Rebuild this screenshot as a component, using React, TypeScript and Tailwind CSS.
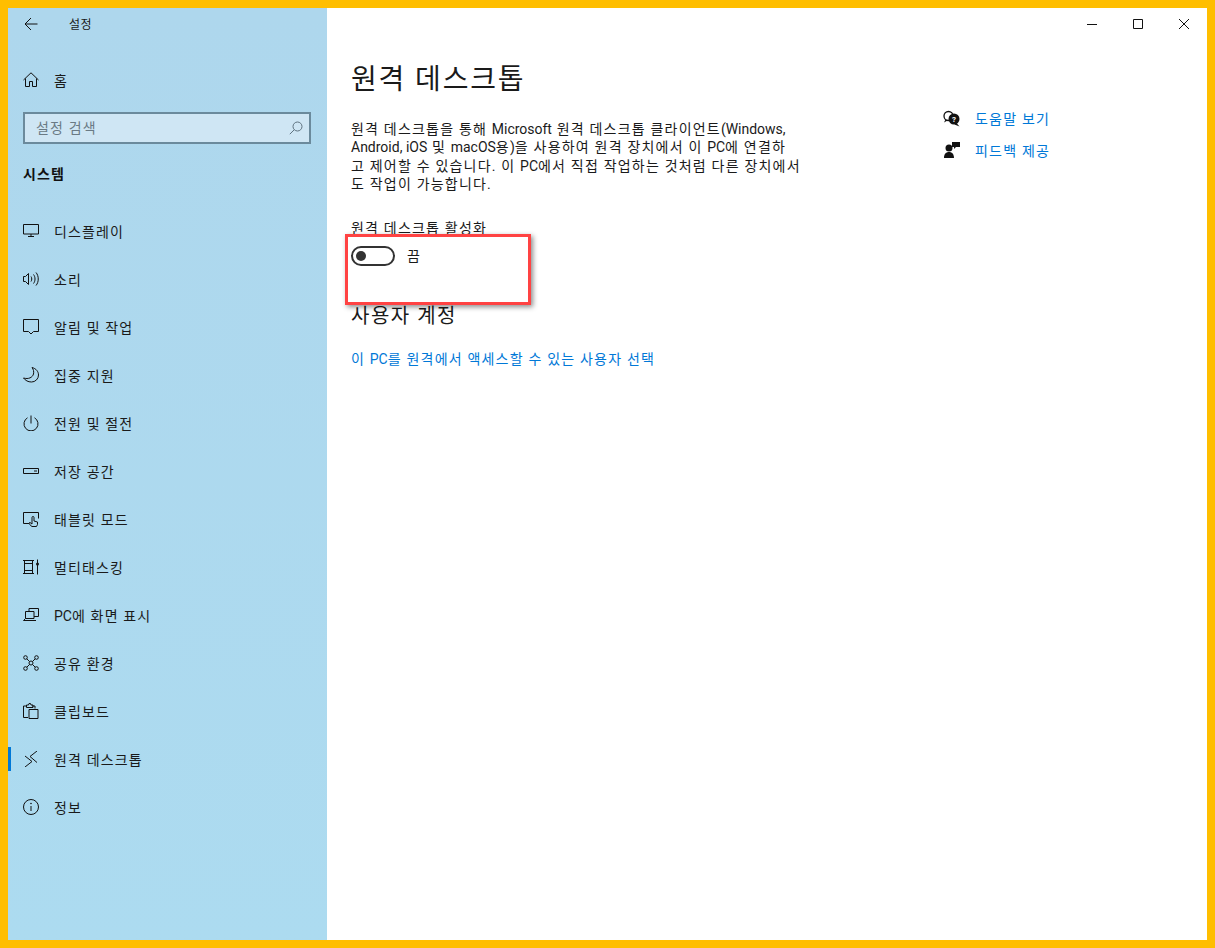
import type { ReactNode } from 'react';

const font = 'font-["Roboto","Noto_Sans_CJK_KR",sans-serif]';

function Icon({ children }: { children: ReactNode }) {
  return (
    <svg width="16" height="16" viewBox="0 0 16 16" fill="none" stroke="#111" strokeWidth="1" className="shrink-0">
      {children}
    </svg>
  );
}

// latin runs sit tighter than the hangul around them
function Lt({ children }: { children: ReactNode }) {
  return <span className="tracking-normal">{children}</span>;
}

const navItems: { label: ReactNode; key: string; icon: ReactNode; active?: boolean }[] = [
  {
    key: 'display',
    label: '디스플레이',
    icon: <path d="M.5 1.500h15v9.500H.5zM8 11v3M5 13.500h6" />,
  },
  {
    key: 'sound',
    label: '소리',
    icon: (
      <>
        <path d="M.5 5.500h2l3-3v11l-3-3h-2z" />
        <path d="M8 5.500c1 1.500 1 3.500 0 5M10.500 3.500c2 2.500 2 6.500 0 9M13 1.500c3 3.500 3 9.500 0 13" />
      </>
    ),
  },
  {
    key: 'notify',
    label: '알림 및 작업',
    icon: <path d="M.5.500h15v12h-5L8 15l-2.500-2.500h-5z" />,
  },
  {
    key: 'focus',
    label: '집중 지원',
    icon: <path d="M9 .5c4 1 6.500 4 6.500 7.500a7 7 0 0 1-7 7c-3.500 0-6-1.500-8-4 5 1.500 9-.5 10-4 .5-2.500 0-4.500-1.500-6.500z" />,
  },
  {
    key: 'power',
    label: '전원 및 절전',
    icon: <path d="M8 .5v8M4.500 2.800a7 7 0 1 0 7 0" />,
  },
  {
    key: 'storage',
    label: '저장 공간',
    icon: <path d="M.5 5.500h15v5H.5zM11 8h3" />,
  },
  {
    key: 'tablet',
    label: '태블릿 모드',
    icon: (
      <>
        <path d="M6 12.500H.5V1.500h15v6" />
        <path d="M9 15.500c-1.500-1-3-2.500-3-3.500l1 -.5 2 1.500V6.500a1 1 0 0 1 2 0V10l3.500 1v2.500l-1 2z" />
      </>
    ),
  },
  {
    key: 'multitask',
    label: '멀티태스킹',
    icon: (
      <>
        <path d="M0 1.500h11M1.500 1.500v13M9.500 1.500v13M1.500 4.500h8M1.500 11.500h8M0 14.500h11" />
        <path d="M14.500 .5v15" />
        <circle cx="14.500" cy="5" r="1.500" fill="#111" stroke="none" />
      </>
    ),
  },
  {
    key: 'project',
    label: (
      <>
        <Lt>PC</Lt>에 화면 표시
      </>
    ),
    icon: (
      <>
        <path d="M6 4V1.500h9.500v8H11" />
        <path d="M2.500 4.500h8.500v7H2.500zM.5 13.500h12.500M2.500 11.500l-2 2" />
      </>
    ),
  },
  {
    key: 'shared',
    label: '공유 환경',
    icon: (
      <>
        <circle cx="8" cy="8" r="2" />
        <circle cx="2.500" cy="2.500" r="1.800" />
        <circle cx="13.500" cy="2.500" r="1.800" />
        <circle cx="2.500" cy="13.500" r="1.800" />
        <circle cx="13.500" cy="13.500" r="1.800" />
        <path d="M3.800 3.800l2.800 2.800M12.200 3.800L9.400 6.600M3.800 12.200l2.800-2.800M12.200 12.200L9.400 9.400" />
      </>
    ),
  },
  {
    key: 'clipboard',
    label: '클립보드',
    icon: (
      <>
        <path d="M5 14.500H.5V3h3M9 3h3v2.500" />
        <path d="M3.500 4.500V2h2l.5-1.500h1.500L8 2h2v2.500zM6 6.500h9v9H6z" />
      </>
    ),
  },
  {
    key: 'remote',
    label: '원격 데스크톱',
    active: true,
    icon: <path d="M2 5l7 5.500L2 16M14 0L7 5.500l7 6" />,
  },
  {
    key: 'about',
    label: '정보',
    icon: (
      <>
        <circle cx="8" cy="8" r="7.500" />
        <path d="M8 7v5" />
        <circle cx="8" cy="4.500" r=".8" fill="#111" stroke="none" />
      </>
    ),
  },
];

function NavRow({ label, icon, active }: { label: ReactNode; icon: ReactNode; active?: boolean }) {
  return (
    <div className="relative flex h-12 items-center pl-[15px]">
      {active && <span className="absolute left-0 top-3 h-6 w-[3px] bg-[#0078d7]" />}
      <Icon>{icon}</Icon>
      <span className="ml-[15px] pt-[3px] text-[14px] tracking-[1.15px] text-[#1a1a1a]">{label}</span>
    </div>
  );
}

export default function App() {
  return (
    <div className={`flex h-[948px] w-[1215px] border-8 border-[#ffbe00] bg-white ${font}`}>
      <aside className="flex w-[319px] shrink-0 flex-col bg-gradient-to-b from-[#aed7ed] to-[#acdbf0]">
        <div className="flex h-8 items-center pl-4">
          <svg width="14" height="14" viewBox="0 0 14 14" fill="none" stroke="#111" strokeWidth="1">
            <path d="M13.500 7H1M7 1L1 7l6 6" />
          </svg>
          <span className="ml-[31px] pt-[2px] text-[12px] tracking-[0.4px] text-[#1a1a1a]">설정</span>
        </div>
        <div className="mt-4">
          <NavRow
            label="홈"
            icon={<path d="M8 .8L.5 8M8 .8L15.500 8M2.500 6.500v8h4V9.500h3v5h4v-8" />}
          />
        </div>
        <div className="ml-[15px] mt-2 flex h-8 w-[288px] items-center justify-between border-2 border-[#6b8a9c] bg-[#cfe6f4] pl-[11px] pr-[6px]">
          <span className="text-[14px] tracking-[1.15px] text-[#6a7a84]">설정 검색</span>
          <svg width="14" height="14" viewBox="0 0 14 14" fill="none" stroke="#5f7380" strokeWidth="1">
            <circle cx="8.500" cy="5.500" r="4.500" />
            <path d="M5.300 8.700L.8 13.200" />
          </svg>
        </div>
        <div className="mt-[19px] flex h-[22px] items-center pl-[15px] text-[14px] font-bold tracking-[1.15px] text-[#111]">
          시스템
        </div>
        <nav className="mt-[22px] flex flex-col">
          {navItems.map((item) => (
            <NavRow key={item.key} label={item.label} icon={item.icon} active={item.active} />
          ))}
        </nav>
      </aside>

      <main className="relative flex min-w-0 flex-1 flex-col">
        <div className="flex h-8 items-center justify-end text-[#111]">
          <span className="flex w-[46px] justify-center">
            <svg width="10" height="10" viewBox="0 0 10 10" stroke="#111" fill="none">
              <path d="M0 5.500h10" />
            </svg>
          </span>
          <span className="flex w-[46px] justify-center">
            <svg width="10" height="10" viewBox="0 0 10 10" stroke="#111" fill="none">
              <path d="M.5.500h9v9h-9z" />
            </svg>
          </span>
          <span className="flex w-[46px] justify-center">
            <svg width="10" height="10" viewBox="0 0 10 10" stroke="#111" fill="none">
              <path d="M0 0l10 10M10 0L0 10" />
            </svg>
          </span>
        </div>
        <div className="flex">
          <section className="w-[592px] pl-6">
            <h1 className="mt-[19px] text-[28px] leading-[42px] tracking-[1.85px] text-[#1a1a1a]">원격 데스크톱</h1>
            <p className="mt-[19px] text-[14px] leading-[18.4px] tracking-[1.2px] text-[#1a1a1a]">
              원격 데스크톱을 통해 <Lt>Microsoft</Lt> 원격 데스크톱 클라이언트<Lt>(Windows,</Lt>
              <br />
              <Lt>Android, iOS</Lt> 및 <Lt>macOS</Lt>용<Lt>)</Lt>을 사용하여 원격 장치에서 이 <Lt>PC</Lt>에 연결하
              <br />
              고 제어할 수 있습니다. 이 <Lt>PC</Lt>에서 직접 작업하는 것처럼 다른 장치에서
              <br />
              도 작업이 가능합니다.
            </p>
            <div className="mt-[24px] text-[14px] leading-5 tracking-[1.2px] text-[#1a1a1a]">원격 데스크톱 활성화</div>
            <div className="mt-[8px] flex items-center">
              <span className="flex h-5 w-11 items-center rounded-full border-2 border-[#333] pl-[3px]">
                <span className="h-[10px] w-[10px] rounded-full bg-[#333]" />
              </span>
              <span className="ml-3 text-[14px] text-[#1a1a1a]">끔</span>
            </div>
            <h2 className="mt-[34px] text-[20px] leading-[30px] tracking-[1.5px] text-[#1a1a1a]">사용자 계정</h2>
            <a className="mt-[18px] block text-[14px] leading-5 tracking-[1.2px] text-[#0078d7]">
              이 <Lt>PC</Lt>를 원격에서 액세스할 수 있는 사용자 선택
            </a>
          </section>
          <section className="ml-[24px] flex flex-col pt-[68px]">
            <div className="flex h-5 items-center">
              <svg width="18" height="18" viewBox="0 0 18 18" className="shrink-0">
                <circle cx="5.500" cy="7" r="4.500" fill="none" stroke="#111" strokeWidth="1.300" />
                <path d="M2.500 10.500l-1.500 3 3.500-2z" fill="#111" />
                <circle cx="11" cy="10" r="5.500" fill="#111" />
                <path d="M13.500 14l3 3.500-5-2z" fill="#111" />
                <text x="11" y="13" fontSize="8" fontWeight="700" fill="#fff" textAnchor="middle">?</text>
              </svg>
              <span className="ml-[14px] pt-[2px] text-[14px] tracking-[1.2px] text-[#0078d7]">도움말 보기</span>
            </div>
            <div className="mt-3 flex h-5 items-center">
              <svg width="18" height="18" viewBox="0 0 18 18" className="shrink-0" fill="#111">
                <circle cx="6" cy="7" r="3.500" />
                <path d="M1 17c0-4 2-6 5-6s5 2 5 6zM9 1h8v5h-4l-2 2V6H9z" />
              </svg>
              <span className="ml-[14px] pt-[2px] text-[14px] tracking-[1.2px] text-[#0078d7]">피드백 제공</span>
            </div>
          </section>
        </div>
        {/* annotation box drawn over the screenshot */}
        <div className="absolute left-[18px] top-[226px] h-[71px] w-[186px] border-[3px] border-[#ff4343] shadow-[2px_2px_5px_rgba(0,0,0,0.45)]" />
      </main>
    </div>
  );
}
